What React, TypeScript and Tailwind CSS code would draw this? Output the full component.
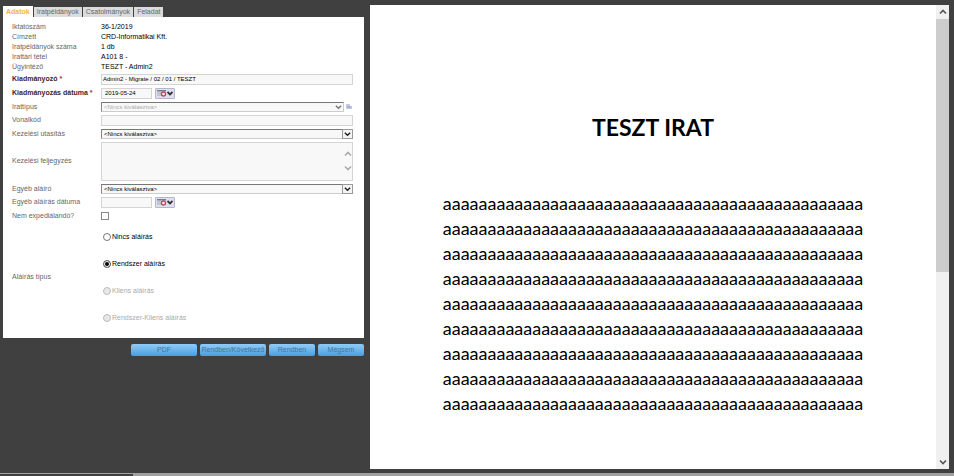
import React from 'react';

const UI = "font-['Liberation_Sans',Arial,sans-serif]";

const tabs = ['Adatok', 'Iratpéldányok', 'Csatolmányok', 'Feladat'];

const facts = [
  ['Iktatószám', '36-1/2019'],
  ['Címzett', 'CRD-Informatikai Kft.'],
  ['Iratpéldányok száma', '1 db'],
  ['Irattári tétel', 'A101 8 -'],
  ['Ügyintéző', 'TESZT - Admin2'],
];

const signatures = [
  { id: 'none', label: 'Nincs aláírás', disabled: false },
  { id: 'system', label: 'Rendszer aláírás', disabled: false },
  { id: 'client', label: 'Kliens aláírás', disabled: true },
  { id: 'both', label: 'Rendszer-Kliens aláírás', disabled: true },
];

const bodyLines = Array.from({ length: 9 }, () => 'a'.repeat(47));

function Row({ id, label, required, className, children }: {
  id: string;
  label: string;
  required?: boolean;
  className: string;
  children: React.ReactNode;
}) {
  return (
    <div className={`flex items-center ${className}`}>
      <label
        htmlFor={id}
        className={`w-[89px] shrink-0 whitespace-nowrap ${required ? 'font-bold text-[#43232c]' : 'text-[#666]'}`}
      >
        {label}
        {required && <span className="text-[#a03048]"> *</span>}
      </label>
      <div className="flex min-w-0 flex-1 items-center">{children}</div>
    </div>
  );
}

function Chevron({ className, up }: { className: string; up?: boolean }) {
  return (
    <svg viewBox="0 0 8 6" className={className} fill="none" stroke="currentColor" strokeWidth="1.6" aria-hidden="true">
      <path d={up ? 'M1 4.5 4 1.5 7 4.5' : 'M1 1.5 4 4.5 7 1.5'} />
    </svg>
  );
}

function DateField({ id, value }: { id: string; value: string }) {
  return (
    <>
      <input id={id} defaultValue={value} className="h-[11px] w-[51px] border border-[#d4d4d4] bg-[#f8f8f8] px-[3px] text-[6px] text-black" />
      <button type="button" aria-label="Naptár" className="ml-[3px] flex h-[11px] w-[20px] items-center justify-center rounded-[1px] border border-[#b4b6cc] bg-[#dfe0ef] text-[#333]">
        <svg viewBox="0 0 10 7" className="h-[7px] w-[10px]" aria-hidden="true">
          <path d="M0 0h9v1.5H0z" fill="#777b94" />
          <path d="M0 3h4M0 5h4" stroke="#aaa" />
          <circle cx="6.5" cy="4" r="2" fill="#fff" stroke="#b84c5c" strokeWidth="1.4" />
        </svg>
        <svg viewBox="0 0 6 5" className="h-[5px] w-[6px]" fill="none" stroke="currentColor" strokeWidth="1.8" aria-hidden="true">
          <path d="M.5 1 3 3.5 5.500 1" />
        </svg>
      </button>
    </>
  );
}

function Select({ id, disabled }: { id: string; disabled?: boolean }) {
  return (
    <div className="relative flex min-w-0 flex-1">
      <select
        id={id}
        disabled={disabled}
        className={`h-[10px] w-full appearance-none border border-[#ccc] border-t-[#777] border-l-[#888] bg-[#f8f8f8] px-[2px] text-[6px] leading-[8px] opacity-100 ${disabled ? 'text-[#aaa]' : 'text-black'}`}
      >
        <option>&lt;Nincs kiválasztva&gt;</option>
      </select>
      <span className={`pointer-events-none absolute top-0 right-0 flex h-[10px] w-[11px] items-center justify-center ${disabled ? 'text-[#777]' : 'border border-[#999] bg-[#f4f4f4] text-[#222]'}`}>
        <Chevron className="h-[6px] w-[7px]" />
      </span>
    </div>
  );
}

function ActionButton({ className, children }: { className: string; children: React.ReactNode }) {
  return (
    <button type="button" className={`h-[12px] rounded-[2px] bg-linear-to-b from-[#8fcbf6] to-[#479fe0] text-center text-[7px] leading-[12px] whitespace-nowrap text-[#42749b] ${className}`}>
      {children}
    </button>
  );
}

export default function App() {
  return (
    <div className={`flex min-h-screen flex-col bg-[#404040] ${UI} text-[7px] leading-[10px]`}>
      <div className="flex flex-1 pt-[5px] pr-[5px] pb-[4px] pl-[3px]">
        <section className="w-[361px] shrink-0 pt-px">
          <nav className="flex h-[11px] items-end gap-px">
            {tabs.map((tab, i) => (
              <button
                key={tab}
                type="button"
                className={`px-[3px] text-[7px] leading-[10px] ${i === 0 ? 'h-[11px] bg-white font-bold text-[#f0b440]' : 'h-[10px] bg-[#dcdcdc] text-[#666]'}`}
              >
                {tab}
              </button>
            ))}
          </nav>

          <form className="bg-white pt-[5px] pr-[11px] pb-[7px] pl-[9px]">
            <dl>
              {facts.map(([name, value]) => (
                <div key={name} className="flex">
                  <dt className="w-[89px] shrink-0 text-[#666]">{name}</dt>
                  <dd className="text-black">{value}</dd>
                </div>
              ))}
            </dl>
            <Row id="issuer" label="Kiadmányozó" required className="h-[14px]">
              <input id="issuer" defaultValue="Admin2 - Migrate / 02 / 01 / TESZT" className="h-[11px] w-full border border-[#d4d4d4] bg-[#f8f8f8] px-px text-[6px] text-black" />
            </Row>
            <Row id="date" label="Kiadmányozás dátuma" required className="h-[14px]">
              <DateField id="date" value="2019-05-24" />
            </Row>
            <Row id="type" label="Irattípus" className="h-[13px]">
              <Select id="type" disabled />
              <svg viewBox="0 0 6 5" className="mr-px ml-[2px] h-[5px] w-[6px]" aria-hidden="true">
                <path d="M0 0h4v2h2v3H0z" fill="#c6cbe2" />
                <path d="M1 3h4" stroke="#9299bb" />
              </svg>
            </Row>
            <Row id="barcode" label="Vonalkód" className="h-[14px]">
              <input id="barcode" className="h-[11px] w-full border border-[#d4d4d4] bg-[#f8f8f8]" />
            </Row>
            <Row id="instruction" label="Kezelési utasítás" className="h-[13px]">
              <Select id="instruction" />
            </Row>
            <Row id="note" label="Kezelési feljegyzés" className="h-[42px]">
              <div className="relative flex w-full">
                <textarea id="note" className="h-[39px] w-full resize-none border border-[#d4d4d4] bg-[#f8f8f8]" />
                <span className="pointer-events-none absolute inset-y-0 right-px flex flex-col items-center justify-center gap-[8px] text-[#aaa]">
                  <Chevron up className="h-[6px] w-[8px]" />
                  <Chevron className="h-[6px] w-[8px]" />
                </span>
              </div>
            </Row>
            <Row id="signer" label="Egyéb aláíró" className="h-[13px]">
              <Select id="signer" />
            </Row>
            <Row id="signdate" label="Egyéb aláírás dátuma" className="h-[14px]">
              <DateField id="signdate" value="" />
            </Row>
            <Row id="nosend" label="Nem expediálandó?" className="h-[14px]">
              <input id="nosend" type="checkbox" className="size-[8px] appearance-none border border-[#888] bg-white" />
            </Row>
            <fieldset className="flex items-center" aria-labelledby="signature-title">
              <span id="signature-title" className="w-[91px] shrink-0 text-[#666]">Aláírás típus</span>
              <div>
                {signatures.map(({ id, label, disabled }) => (
                  <label key={id} className={`flex h-[27px] items-center gap-px ${disabled ? 'text-[#aaa]' : 'text-black'}`}>
                    <input
                      type="radio"
                      name="signature"
                      disabled={disabled}
                      defaultChecked={id === 'system'}
                      className="size-[8px] appearance-none rounded-full border border-[#777] bg-white checked:bg-black checked:shadow-[inset_0_0_0_1px_white] disabled:border-[#bbb] disabled:bg-[#e8e8e8]"
                    />
                    {label}
                  </label>
                ))}
              </div>
            </fieldset>
          </form>

          <div className="mt-[6px] flex justify-end gap-[3px]">
            <ActionButton className="w-[66px]">PDF</ActionButton>
            <ActionButton className="w-[66px]">Rendben/Következő</ActionButton>
            <ActionButton className="w-[46px]">Rendben</ActionButton>
            <ActionButton className="w-[46px]">Mégsem</ActionButton>
          </div>
        </section>

        <main className="ml-[6px] flex flex-1 bg-white">
          <article className="flex-1 font-['Lato','Open_Sans',sans-serif] text-black">
            <h1 className="mt-[107px] text-center text-[23px] leading-[30px] font-bold">TESZT IRAT</h1>
            <div className="mt-[49px] text-center text-[18px] leading-[25px]">
              {bodyLines.map((line, i) => (
                <p key={i}>{line}</p>
              ))}
            </div>
          </article>
          <div className="flex w-[13px] shrink-0 flex-col bg-[#f0f0f0] text-[#555]">
            <button type="button" aria-label="Fel" className="flex h-[14px] items-center justify-center">
              <Chevron up className="h-[6px] w-[8px]" />
            </button>
            <div className="flex-1">
              <div className="h-[58%] bg-[#cdcdcd]" />
            </div>
            <button type="button" aria-label="Le" className="flex h-[14px] items-center justify-center">
              <Chevron className="h-[6px] w-[8px]" />
            </button>
          </div>
        </main>
      </div>
      <footer className="h-[3px] border-t border-[#a0a0a0] bg-[#a0a0a0]">
        <div className="h-[2px] w-[133px] bg-[#404040]" />
      </footer>
    </div>
  );
}
